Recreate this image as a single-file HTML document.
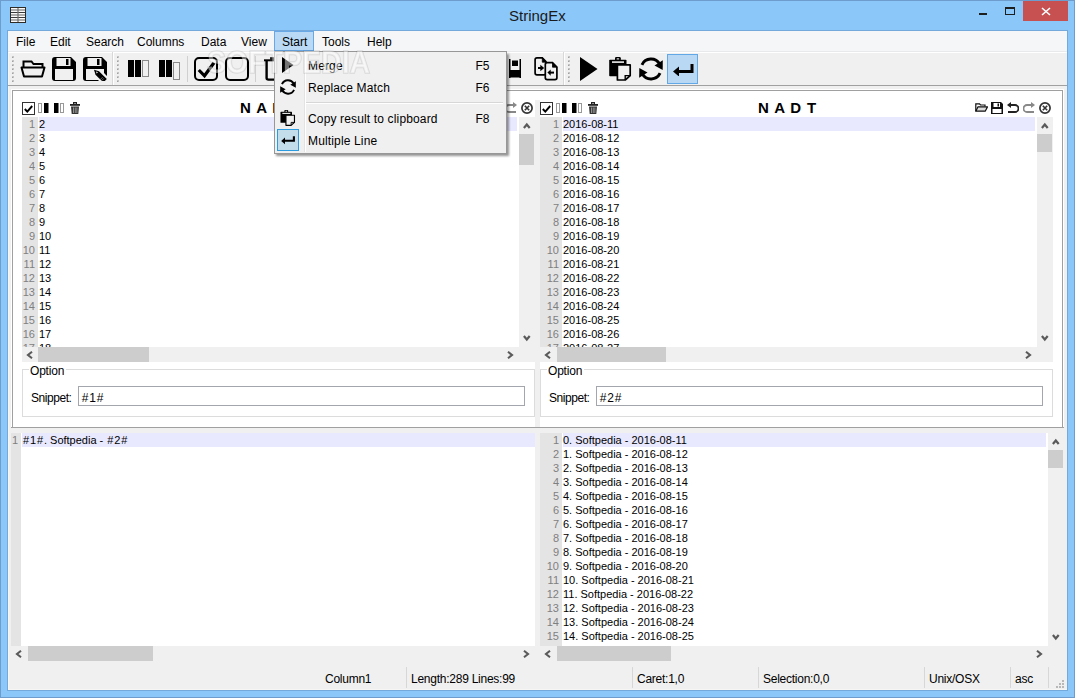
<!DOCTYPE html><html><head><meta charset="utf-8"><style>
html,body{margin:0;padding:0;}
body{width:1075px;height:698px;overflow:hidden;position:relative;background:#8cc7f9;font-family:"Liberation Sans",sans-serif;color:#000;}
.t{position:absolute;white-space:pre;font-size:12px;}
.ed{font-size:11px;}
.ln{position:absolute;text-align:right;color:#7f7f7f;font-size:11px;white-space:pre;}
</style></head><body><div style="position:absolute;left:0px;top:0px;width:1075px;height:698px;box-sizing:border-box;border:1px solid #6e9ccc;"></div><svg style="position:absolute;left:10px;top:7px;" width="16" height="16" viewBox="0 0 16 16"><rect x="0.5" y="0.5" width="15" height="15" fill="#fafafa" stroke="#2e2a26"/><g fill="#aeaeae"><rect x="1" y="2" width="14" height="2"/><rect x="1" y="7" width="14" height="2"/><rect x="1" y="12" width="14" height="2"/></g><g fill="#3a3a3a"><rect x="1" y="5" width="14" height="1"/><rect x="1" y="10" width="14" height="1"/></g><rect x="7.3" y="1" width="1.4" height="14" fill="#707070" opacity="0.85"/></svg><div class="t" style="left:509px;top:6.5px;line-height:17px;font-size:15px;color:#1a1a1a;">StringEx</div><div style="position:absolute;left:979px;top:13px;width:8px;height:2px;background:#1e1e1e;"></div><div style="position:absolute;left:1005px;top:7px;width:10px;height:8px;box-sizing:border-box;border:1px solid #1e1e1e;border-top-width:2px;"></div><div style="position:absolute;left:1023px;top:1px;width:45px;height:20px;background:#c75050;"></div><svg style="position:absolute;left:1041px;top:7px;" width="10" height="9" viewBox="0 0 10 9"><path d="M1 1 L9 8 M9 1 L1 8" stroke="#fff" stroke-width="1.6"/></svg><div style="position:absolute;left:7px;top:30px;width:1061px;height:661px;box-sizing:border-box;border:1px solid #74a9dc;background:#f0f0f0;"></div><div style="position:absolute;left:8px;top:31px;width:1px;height:658px;background:#f8f6f4;"></div><div style="position:absolute;left:8px;top:689px;width:1059px;height:1px;background:#f8f6f4;"></div><div style="position:absolute;left:8px;top:31px;width:1059px;height:20px;background:#f5f6f7;"></div><div style="position:absolute;left:8px;top:51px;width:1059px;height:1px;background:#e8e9eb;"></div><div style="position:absolute;left:8px;top:52px;width:1059px;height:1px;background:#ffffff;"></div><div style="position:absolute;left:274px;top:31px;width:40px;height:20px;box-sizing:border-box;background:#bad9f4;border:1px solid #68a8e6;"></div><div class="t" style="left:16px;top:35px;line-height:15px;">File</div><div class="t" style="left:50px;top:35px;line-height:15px;">Edit</div><div class="t" style="left:86px;top:35px;line-height:15px;">Search</div><div class="t" style="left:137px;top:35px;line-height:15px;">Columns</div><div class="t" style="left:201px;top:35px;line-height:15px;">Data</div><div class="t" style="left:241px;top:35px;line-height:15px;">View</div><div class="t" style="left:282px;top:35px;line-height:15px;">Start</div><div class="t" style="left:322px;top:35px;line-height:15px;">Tools</div><div class="t" style="left:367px;top:35px;line-height:15px;">Help</div><div style="position:absolute;left:8px;top:85px;width:1059px;height:1px;background:#a0a0a0;"></div><div style="position:absolute;left:12px;top:56px;width:2px;height:2px;background:#c4c4c4;"></div><div style="position:absolute;left:12px;top:57px;width:1px;height:1px;background:#a0a0a0;"></div><div style="position:absolute;left:12px;top:60px;width:2px;height:2px;background:#c4c4c4;"></div><div style="position:absolute;left:12px;top:61px;width:1px;height:1px;background:#a0a0a0;"></div><div style="position:absolute;left:12px;top:64px;width:2px;height:2px;background:#c4c4c4;"></div><div style="position:absolute;left:12px;top:65px;width:1px;height:1px;background:#a0a0a0;"></div><div style="position:absolute;left:12px;top:68px;width:2px;height:2px;background:#c4c4c4;"></div><div style="position:absolute;left:12px;top:69px;width:1px;height:1px;background:#a0a0a0;"></div><div style="position:absolute;left:12px;top:72px;width:2px;height:2px;background:#c4c4c4;"></div><div style="position:absolute;left:12px;top:73px;width:1px;height:1px;background:#a0a0a0;"></div><div style="position:absolute;left:12px;top:76px;width:2px;height:2px;background:#c4c4c4;"></div><div style="position:absolute;left:12px;top:77px;width:1px;height:1px;background:#a0a0a0;"></div><div style="position:absolute;left:12px;top:80px;width:2px;height:2px;background:#c4c4c4;"></div><div style="position:absolute;left:12px;top:81px;width:1px;height:1px;background:#a0a0a0;"></div><div style="position:absolute;left:117px;top:56px;width:2px;height:2px;background:#c4c4c4;"></div><div style="position:absolute;left:117px;top:57px;width:1px;height:1px;background:#a0a0a0;"></div><div style="position:absolute;left:117px;top:60px;width:2px;height:2px;background:#c4c4c4;"></div><div style="position:absolute;left:117px;top:61px;width:1px;height:1px;background:#a0a0a0;"></div><div style="position:absolute;left:117px;top:64px;width:2px;height:2px;background:#c4c4c4;"></div><div style="position:absolute;left:117px;top:65px;width:1px;height:1px;background:#a0a0a0;"></div><div style="position:absolute;left:117px;top:68px;width:2px;height:2px;background:#c4c4c4;"></div><div style="position:absolute;left:117px;top:69px;width:1px;height:1px;background:#a0a0a0;"></div><div style="position:absolute;left:117px;top:72px;width:2px;height:2px;background:#c4c4c4;"></div><div style="position:absolute;left:117px;top:73px;width:1px;height:1px;background:#a0a0a0;"></div><div style="position:absolute;left:117px;top:76px;width:2px;height:2px;background:#c4c4c4;"></div><div style="position:absolute;left:117px;top:77px;width:1px;height:1px;background:#a0a0a0;"></div><div style="position:absolute;left:117px;top:80px;width:2px;height:2px;background:#c4c4c4;"></div><div style="position:absolute;left:117px;top:81px;width:1px;height:1px;background:#a0a0a0;"></div><div style="position:absolute;left:568px;top:56px;width:2px;height:2px;background:#c4c4c4;"></div><div style="position:absolute;left:568px;top:57px;width:1px;height:1px;background:#a0a0a0;"></div><div style="position:absolute;left:568px;top:60px;width:2px;height:2px;background:#c4c4c4;"></div><div style="position:absolute;left:568px;top:61px;width:1px;height:1px;background:#a0a0a0;"></div><div style="position:absolute;left:568px;top:64px;width:2px;height:2px;background:#c4c4c4;"></div><div style="position:absolute;left:568px;top:65px;width:1px;height:1px;background:#a0a0a0;"></div><div style="position:absolute;left:568px;top:68px;width:2px;height:2px;background:#c4c4c4;"></div><div style="position:absolute;left:568px;top:69px;width:1px;height:1px;background:#a0a0a0;"></div><div style="position:absolute;left:568px;top:72px;width:2px;height:2px;background:#c4c4c4;"></div><div style="position:absolute;left:568px;top:73px;width:1px;height:1px;background:#a0a0a0;"></div><div style="position:absolute;left:568px;top:76px;width:2px;height:2px;background:#c4c4c4;"></div><div style="position:absolute;left:568px;top:77px;width:1px;height:1px;background:#a0a0a0;"></div><div style="position:absolute;left:568px;top:80px;width:2px;height:2px;background:#c4c4c4;"></div><div style="position:absolute;left:568px;top:81px;width:1px;height:1px;background:#a0a0a0;"></div><div style="position:absolute;left:112px;top:52px;width:1px;height:33px;background:#d8d8d8;"></div><div style="position:absolute;left:113px;top:52px;width:1px;height:33px;background:#ffffff;"></div><div style="position:absolute;left:563px;top:52px;width:1px;height:33px;background:#d8d8d8;"></div><div style="position:absolute;left:564px;top:52px;width:1px;height:33px;background:#ffffff;"></div><div style="position:absolute;left:187px;top:56px;width:1px;height:26px;background:#d0d0d0;"></div><div style="position:absolute;left:255px;top:56px;width:1px;height:26px;background:#d0d0d0;"></div><svg style="position:absolute;left:20px;top:60px;" width="26" height="18" viewBox="0 0 26 18"><path d="M3.5 7 V1.5 H11.5 L13.5 4 H22.5 V7" fill="none" stroke="#000" stroke-width="2"/><path d="M1.5 7.5 H24.5 L22 16.5 H4 Z" fill="none" stroke="#000" stroke-width="2" stroke-linejoin="round"/></svg><svg style="position:absolute;left:52px;top:57px;" width="24" height="24" viewBox="0 0 24 24"><path fill-rule="evenodd" fill="#000" d="M3 0 H19 L24 5 V21 Q24 24 21 24 H3 Q0 24 0 21 V3 Q0 0 3 0 Z M4.5 1 V9 H18.5 V1 Z M3 12 V23 H21 V12 Z"/><rect x="14" y="2" width="2.5" height="6" fill="#000"/></svg><svg style="position:absolute;left:83px;top:57px;" width="24" height="24" viewBox="0 0 24 24"><path fill-rule="evenodd" fill="#000" d="M3 0 H19 L24 5 V19 L21 16 V12 H3 V23 H15 L16 24 H3 Q0 24 0 21 V3 Q0 0 3 0 Z M4.5 1 V9 H18.5 V1 Z"/><rect x="14" y="2" width="2.5" height="6" fill="#000"/><path d="M11 12.8 L16 14.2 L23.8 22 L20.3 25.5 L12.5 17.7 Z" fill="#000"/><path d="M13 14.6 L15 15.2 L13.6 16.6 Z" fill="#f0f0f0"/><path d="M19.6 20.2 L16.8 23 M20.8 21.4 L18 24.2" stroke="#9a9a9a" stroke-width="0.7"/></svg><svg style="position:absolute;left:128px;top:60px;" width="22" height="20" viewBox="0 0 22 20"><rect x="0" y="0" width="6" height="17" fill="#000"/><rect x="7" y="0" width="6" height="17" fill="#000"/><rect x="14.5" y="0.5" width="6" height="16" fill="#f0f0f0" stroke="#8a8a8a"/></svg><svg style="position:absolute;left:159px;top:60px;" width="22" height="20" viewBox="0 0 22 20"><rect x="0" y="0" width="6" height="17" fill="#000"/><rect x="7" y="0" width="6" height="17" fill="#000"/><rect x="14.5" y="2.5" width="6" height="17" fill="#f0f0f0" stroke="#8a8a8a"/></svg><svg style="position:absolute;left:194px;top:57px;" width="24" height="24" viewBox="0 0 24 24"><rect x="1" y="1" width="22" height="22" rx="4" fill="none" stroke="#000" stroke-width="2"/><path d="M4.8 13 L10.5 18.8 L20 5.8" fill="none" stroke="#000" stroke-width="3.2"/></svg><svg style="position:absolute;left:225px;top:57px;" width="24" height="24" viewBox="0 0 24 24"><rect x="1" y="1" width="22" height="22" rx="4" fill="none" stroke="#000" stroke-width="2"/></svg><svg style="position:absolute;left:264px;top:57px;" width="10" height="24" viewBox="0 0 10 24"><path d="M2.6 4 V21 Q2.6 22.6 4.5 22.6 H10" fill="none" stroke="#000" stroke-width="2.4"/><path d="M0 3.3 H10" stroke="#000" stroke-width="2"/><rect x="6" y="0.2" width="4" height="3.5" fill="#222"/></svg><svg style="position:absolute;left:509px;top:59px;" width="12" height="19" viewBox="0 0 12 19"><rect x="3" y="1.5" width="6" height="5.5" fill="#000"/><rect x="0" y="11" width="12" height="7.5" fill="#000"/><rect x="0" y="0" width="1.5" height="19" fill="#000"/><rect x="10.5" y="0" width="1.5" height="19" fill="#000"/></svg><svg style="position:absolute;left:530px;top:54px;" width="30" height="30" viewBox="0 0 30 30"><path d="M7 3.8 H12.3 L16 7.5 V19 Q16 20.9 14 20.9 H7 Q5.1 20.9 5.1 19 V5.8 Q5.1 3.8 7 3.8 Z" fill="#f0f0f0" stroke="#000" stroke-width="1.7"/><path d="M12.3 3.8 V8.2 H16 Z" fill="#000" stroke="#000" stroke-width="0.8"/><path d="M8 14 H12" stroke="#000" stroke-width="2"/><path d="M10.3 10.8 L14.2 14 L10.3 17.2 Z" fill="#000"/><path d="M17.3 8.6 H22.5 L26.9 13 V23.8 Q26.9 25.7 25 25.7 H17.3 Q15.3 25.7 15.3 23.8 V10.6 Q15.3 8.6 17.3 8.6 Z" fill="#f0f0f0" stroke="#000" stroke-width="1.7"/><path d="M22.5 8.6 V13.2 H26.9 Z" fill="#000" stroke="#000" stroke-width="0.8"/><path d="M24 18.6 H20" stroke="#000" stroke-width="2"/><path d="M20.7 15.4 L17.4 18.6 L20.7 21.8 Z" fill="#000"/></svg><svg style="position:absolute;left:579px;top:57px;" width="19" height="24" viewBox="0 0 19 24"><path d="M1 0 L18.5 12 L1 24 Z" fill="#000"/></svg><svg style="position:absolute;left:604px;top:54px;" width="30" height="30" viewBox="0 0 30 30"><rect x="5.2" y="5.8" width="17.3" height="16.4" rx="0.8" fill="#000"/><rect x="11" y="3" width="5.8" height="3.6" rx="1.3" fill="#000"/><rect x="12.6" y="4.3" width="2.6" height="1.2" rx="0.5" fill="#d8d8d8"/><rect x="8" y="7.3" width="12" height="1.6" fill="#f0f0f0"/><path d="M13.4 10.9 H26.2 V21.6 L21.2 26 H13.4 Z" fill="#f0f0f0" stroke="#000" stroke-width="1.7" stroke-linejoin="round"/><path d="M21.2 26 V21.6 H26.2" fill="none" stroke="#000" stroke-width="1.4"/></svg><svg style="position:absolute;left:636px;top:54px;" width="30" height="30" viewBox="0 0 30 30"><path d="M5.94 10.77 A10 10 0 0 1 23.66 10" fill="none" stroke="#000" stroke-width="2.9"/><path d="M26.8 6.2 L26.7 16 L18.5 11.6 Z" fill="#000"/><path d="M24.06 19.23 A10 10 0 0 1 6.34 20" fill="none" stroke="#000" stroke-width="2.9"/><path d="M3.2 23.8 L3.3 14 L11.5 18.4 Z" fill="#000"/></svg><div style="position:absolute;left:667px;top:54px;width:31px;height:30px;box-sizing:border-box;background:#b8d8f4;border:1px solid #62a7e6;"></div><svg style="position:absolute;left:673px;top:63px;" width="21" height="13" viewBox="0 0 21 13"><path d="M19 1 V8.5 H5" fill="none" stroke="#000" stroke-width="3"/><path d="M0 8.5 L6 3.5 V13.5 Z" fill="#000"/></svg><div style="position:absolute;left:11px;top:89px;width:1053px;height:339px;background:#fff;"></div><div style="position:absolute;left:12px;top:90px;width:1051px;height:1px;background:#a0a0a0;"></div><div style="position:absolute;left:12px;top:90px;width:1px;height:337px;background:#a0a0a0;"></div><div style="position:absolute;left:1062px;top:90px;width:1px;height:337px;background:#a0a0a0;"></div><div style="position:absolute;left:11px;top:427px;width:1053px;height:1px;background:#a0a0a0;"></div><div style="position:absolute;left:535px;top:100px;width:5px;height:327px;background:#f0f0f0;"></div><div style="position:absolute;left:22px;top:102px;width:13px;height:13px;box-sizing:border-box;border:1px solid #333;background:#fff;"></div><svg style="position:absolute;left:24px;top:105px;" width="9" height="8" viewBox="0 0 9 8"><path d="M0.8 4 L3.3 6.6 L8.2 1" fill="none" stroke="#000" stroke-width="1.9"/></svg><svg style="position:absolute;left:38px;top:103px;" width="11" height="10" viewBox="0 0 11 10"><rect x="0.5" y="0.5" width="3" height="9" fill="#fff" stroke="#999"/><rect x="6" y="0" width="4.5" height="10" fill="#000"/></svg><svg style="position:absolute;left:54px;top:103px;" width="11" height="10" viewBox="0 0 11 10"><rect x="0" y="0" width="4.5" height="10" fill="#000"/><rect x="6.5" y="0.5" width="3" height="9" fill="#fff" stroke="#999"/></svg><svg style="position:absolute;left:70px;top:102px;" width="10" height="12" viewBox="0 0 10 12"><rect x="3.5" y="0.5" width="3" height="1.5" fill="none" stroke="#222" stroke-width="1"/><rect x="0" y="2" width="10" height="1.8" fill="#222"/><path d="M1 4.5 H9 L8.3 12 H1.7 Z" fill="#333"/><g fill="#aaa"><rect x="3" y="5.5" width="0.8" height="5.5"/><rect x="4.8" y="5.5" width="0.8" height="5.5"/><rect x="6.5" y="5.5" width="0.8" height="5.5"/></g></svg><svg style="position:absolute;left:457px;top:103px;" width="13" height="9" viewBox="0 0 13 9"><path d="M0.8 8.2 V0.8 H4.5 L5.5 2 H10 V3.5" fill="none" stroke="#111" stroke-width="1.2"/><path d="M0.8 8.2 L3 3.8 H12.5 L10.2 8.2 Z" fill="#ddd" stroke="#111" stroke-width="1.2" stroke-linejoin="round"/></svg><svg style="position:absolute;left:473px;top:102px;" width="12" height="12" viewBox="0 0 12 12"><path fill-rule="evenodd" fill="#111" d="M0 0 H10 L12 2 V12 H0 Z M2.5 1 V5 H9 V1 Z M1.5 7 V11 H10.5 V7 Z"/><rect x="6.5" y="1.5" width="1.5" height="3" fill="#111"/></svg><svg style="position:absolute;left:489px;top:102px;" width="12" height="12" viewBox="0 0 12 12"><path d="M3 3 H8 A3.5 3.5 0 0 1 8 10 H1" fill="none" stroke="#222" stroke-width="1.8"/><path d="M0 3 L4 0 V6 Z" fill="#222"/></svg><svg style="position:absolute;left:505px;top:102px;" width="12" height="12" viewBox="0 0 12 12"><path d="M9 3 H4 A3.5 3.5 0 0 0 4 10 H11" fill="none" stroke="#888" stroke-width="1.8"/><path d="M12 3 L8 0 V6 Z" fill="#888"/></svg><svg style="position:absolute;left:521px;top:102px;" width="12" height="12" viewBox="0 0 12 12"><circle cx="6" cy="6" r="5.1" fill="none" stroke="#333" stroke-width="1.7"/><path d="M3.8 3.8 L8.2 8.2 M8.2 3.8 L3.8 8.2" stroke="#333" stroke-width="1.6"/></svg><div class="t" style="left:240px;top:100px;line-height:16px;font-size:15px;font-weight:bold;letter-spacing:0.85px;">N A D T</div><div style="position:absolute;left:22px;top:117px;width:497px;height:230px;overflow:hidden;background:#fff;"><div style="position:absolute;left:0;top:0;width:16px;height:230px;background:#e4e4e4;"></div><div style="position:absolute;left:17px;top:0;width:478px;height:14px;background:#e8e8ff;"></div><div class="ln" style="left:0;top:0px;width:13px;line-height:14px;">1</div><div class="t" style="left:17px;top:0px;font-size:11px;line-height:14px;">2</div><div class="ln" style="left:0;top:14px;width:13px;line-height:14px;">2</div><div class="t" style="left:17px;top:14px;font-size:11px;line-height:14px;">3</div><div class="ln" style="left:0;top:28px;width:13px;line-height:14px;">3</div><div class="t" style="left:17px;top:28px;font-size:11px;line-height:14px;">4</div><div class="ln" style="left:0;top:42px;width:13px;line-height:14px;">4</div><div class="t" style="left:17px;top:42px;font-size:11px;line-height:14px;">5</div><div class="ln" style="left:0;top:56px;width:13px;line-height:14px;">5</div><div class="t" style="left:17px;top:56px;font-size:11px;line-height:14px;">6</div><div class="ln" style="left:0;top:70px;width:13px;line-height:14px;">6</div><div class="t" style="left:17px;top:70px;font-size:11px;line-height:14px;">7</div><div class="ln" style="left:0;top:84px;width:13px;line-height:14px;">7</div><div class="t" style="left:17px;top:84px;font-size:11px;line-height:14px;">8</div><div class="ln" style="left:0;top:98px;width:13px;line-height:14px;">8</div><div class="t" style="left:17px;top:98px;font-size:11px;line-height:14px;">9</div><div class="ln" style="left:0;top:112px;width:13px;line-height:14px;">9</div><div class="t" style="left:17px;top:112px;font-size:11px;line-height:14px;">10</div><div class="ln" style="left:0;top:126px;width:13px;line-height:14px;">10</div><div class="t" style="left:17px;top:126px;font-size:11px;line-height:14px;">11</div><div class="ln" style="left:0;top:140px;width:13px;line-height:14px;">11</div><div class="t" style="left:17px;top:140px;font-size:11px;line-height:14px;">12</div><div class="ln" style="left:0;top:154px;width:13px;line-height:14px;">12</div><div class="t" style="left:17px;top:154px;font-size:11px;line-height:14px;">13</div><div class="ln" style="left:0;top:168px;width:13px;line-height:14px;">13</div><div class="t" style="left:17px;top:168px;font-size:11px;line-height:14px;">14</div><div class="ln" style="left:0;top:182px;width:13px;line-height:14px;">14</div><div class="t" style="left:17px;top:182px;font-size:11px;line-height:14px;">15</div><div class="ln" style="left:0;top:196px;width:13px;line-height:14px;">15</div><div class="t" style="left:17px;top:196px;font-size:11px;line-height:14px;">16</div><div class="ln" style="left:0;top:210px;width:13px;line-height:14px;">16</div><div class="t" style="left:17px;top:210px;font-size:11px;line-height:14px;">17</div><div class="ln" style="left:0;top:224px;width:13px;line-height:14px;">17</div><div class="t" style="left:17px;top:224px;font-size:11px;line-height:14px;">18</div></div><div style="position:absolute;left:519px;top:117px;width:16px;height:230px;background:#f0f0f0;"></div><svg style="position:absolute;left:523px;top:122px;" width="8" height="7" viewBox="0 0 8 7"><path d="M0.9 6 L3.8 2.5 L6.7 6" fill="none" stroke="#5a5a5a" stroke-width="2.2"/></svg><div style="position:absolute;left:519px;top:134px;width:15px;height:31px;background:#cdcdcd;"></div><svg style="position:absolute;left:523px;top:335px;" width="8" height="7" viewBox="0 0 8 7"><path d="M0.9 1 L3.8 4.5 L6.7 1" fill="none" stroke="#5a5a5a" stroke-width="2.2"/></svg><div style="position:absolute;left:22px;top:347px;width:513px;height:15px;background:#f0f0f0;"></div><svg style="position:absolute;left:26px;top:351px;" width="7" height="8" viewBox="0 0 7 8"><path d="M6 0.8 L2 4 L6 7.2" fill="none" stroke="#5a5a5a" stroke-width="2.1"/></svg><div style="position:absolute;left:38px;top:347px;width:111px;height:15px;background:#cdcdcd;"></div><svg style="position:absolute;left:507px;top:351px;" width="7" height="8" viewBox="0 0 7 8"><path d="M1 0.8 L5 4 L1 7.2" fill="none" stroke="#5a5a5a" stroke-width="2.1"/></svg><div style="position:absolute;left:22px;top:369px;width:513px;height:48px;box-sizing:border-box;border:1px solid #dcdcdc;"></div><div style="position:absolute;left:29px;top:365px;width:37px;height:8px;background:#fff;"></div><div class="t" style="left:30px;top:364px;line-height:14px;font-size:12px;letter-spacing:-0.2px;">Option</div><div class="t" style="left:31px;top:390.5px;line-height:14px;font-size:12px;letter-spacing:-0.45px;">Snippet:</div><div style="position:absolute;left:78px;top:386px;width:447px;height:20px;box-sizing:border-box;border:1px solid #a3a6ad;background:#fff;"></div><div class="t" style="left:81px;top:391px;line-height:14px;font-size:12px;"><span style="margin:0 0.75px">#</span>1<span style="margin:0 0.75px">#</span></div><div style="position:absolute;left:540px;top:102px;width:13px;height:13px;box-sizing:border-box;border:1px solid #333;background:#fff;"></div><svg style="position:absolute;left:542px;top:105px;" width="9" height="8" viewBox="0 0 9 8"><path d="M0.8 4 L3.3 6.6 L8.2 1" fill="none" stroke="#000" stroke-width="1.9"/></svg><svg style="position:absolute;left:556px;top:103px;" width="11" height="10" viewBox="0 0 11 10"><rect x="0.5" y="0.5" width="3" height="9" fill="#fff" stroke="#999"/><rect x="6" y="0" width="4.5" height="10" fill="#000"/></svg><svg style="position:absolute;left:572px;top:103px;" width="11" height="10" viewBox="0 0 11 10"><rect x="0" y="0" width="4.5" height="10" fill="#000"/><rect x="6.5" y="0.5" width="3" height="9" fill="#fff" stroke="#999"/></svg><svg style="position:absolute;left:588px;top:102px;" width="10" height="12" viewBox="0 0 10 12"><rect x="3.5" y="0.5" width="3" height="1.5" fill="none" stroke="#222" stroke-width="1"/><rect x="0" y="2" width="10" height="1.8" fill="#222"/><path d="M1 4.5 H9 L8.3 12 H1.7 Z" fill="#333"/><g fill="#aaa"><rect x="3" y="5.5" width="0.8" height="5.5"/><rect x="4.8" y="5.5" width="0.8" height="5.5"/><rect x="6.5" y="5.5" width="0.8" height="5.5"/></g></svg><svg style="position:absolute;left:975px;top:103px;" width="13" height="9" viewBox="0 0 13 9"><path d="M0.8 8.2 V0.8 H4.5 L5.5 2 H10 V3.5" fill="none" stroke="#111" stroke-width="1.2"/><path d="M0.8 8.2 L3 3.8 H12.5 L10.2 8.2 Z" fill="#ddd" stroke="#111" stroke-width="1.2" stroke-linejoin="round"/></svg><svg style="position:absolute;left:991px;top:102px;" width="12" height="12" viewBox="0 0 12 12"><path fill-rule="evenodd" fill="#111" d="M0 0 H10 L12 2 V12 H0 Z M2.5 1 V5 H9 V1 Z M1.5 7 V11 H10.5 V7 Z"/><rect x="6.5" y="1.5" width="1.5" height="3" fill="#111"/></svg><svg style="position:absolute;left:1007px;top:102px;" width="12" height="12" viewBox="0 0 12 12"><path d="M3 3 H8 A3.5 3.5 0 0 1 8 10 H1" fill="none" stroke="#222" stroke-width="1.8"/><path d="M0 3 L4 0 V6 Z" fill="#222"/></svg><svg style="position:absolute;left:1023px;top:102px;" width="12" height="12" viewBox="0 0 12 12"><path d="M9 3 H4 A3.5 3.5 0 0 0 4 10 H11" fill="none" stroke="#888" stroke-width="1.8"/><path d="M12 3 L8 0 V6 Z" fill="#888"/></svg><svg style="position:absolute;left:1039px;top:102px;" width="12" height="12" viewBox="0 0 12 12"><circle cx="6" cy="6" r="5.1" fill="none" stroke="#333" stroke-width="1.7"/><path d="M3.8 3.8 L8.2 8.2 M8.2 3.8 L3.8 8.2" stroke="#333" stroke-width="1.6"/></svg><div class="t" style="left:758px;top:100px;line-height:16px;font-size:15px;font-weight:bold;letter-spacing:0.85px;">N A D T</div><div style="position:absolute;left:540px;top:117px;width:497px;height:230px;overflow:hidden;background:#fff;"><div style="position:absolute;left:0;top:0;width:22px;height:230px;background:#e4e4e4;"></div><div style="position:absolute;left:23px;top:0;width:472px;height:14px;background:#e8e8ff;"></div><div class="ln" style="left:0;top:0px;width:19px;line-height:14px;">1</div><div class="t" style="left:23px;top:0px;font-size:11px;line-height:14px;">2016-08-11</div><div class="ln" style="left:0;top:14px;width:19px;line-height:14px;">2</div><div class="t" style="left:23px;top:14px;font-size:11px;line-height:14px;">2016-08-12</div><div class="ln" style="left:0;top:28px;width:19px;line-height:14px;">3</div><div class="t" style="left:23px;top:28px;font-size:11px;line-height:14px;">2016-08-13</div><div class="ln" style="left:0;top:42px;width:19px;line-height:14px;">4</div><div class="t" style="left:23px;top:42px;font-size:11px;line-height:14px;">2016-08-14</div><div class="ln" style="left:0;top:56px;width:19px;line-height:14px;">5</div><div class="t" style="left:23px;top:56px;font-size:11px;line-height:14px;">2016-08-15</div><div class="ln" style="left:0;top:70px;width:19px;line-height:14px;">6</div><div class="t" style="left:23px;top:70px;font-size:11px;line-height:14px;">2016-08-16</div><div class="ln" style="left:0;top:84px;width:19px;line-height:14px;">7</div><div class="t" style="left:23px;top:84px;font-size:11px;line-height:14px;">2016-08-17</div><div class="ln" style="left:0;top:98px;width:19px;line-height:14px;">8</div><div class="t" style="left:23px;top:98px;font-size:11px;line-height:14px;">2016-08-18</div><div class="ln" style="left:0;top:112px;width:19px;line-height:14px;">9</div><div class="t" style="left:23px;top:112px;font-size:11px;line-height:14px;">2016-08-19</div><div class="ln" style="left:0;top:126px;width:19px;line-height:14px;">10</div><div class="t" style="left:23px;top:126px;font-size:11px;line-height:14px;">2016-08-20</div><div class="ln" style="left:0;top:140px;width:19px;line-height:14px;">11</div><div class="t" style="left:23px;top:140px;font-size:11px;line-height:14px;">2016-08-21</div><div class="ln" style="left:0;top:154px;width:19px;line-height:14px;">12</div><div class="t" style="left:23px;top:154px;font-size:11px;line-height:14px;">2016-08-22</div><div class="ln" style="left:0;top:168px;width:19px;line-height:14px;">13</div><div class="t" style="left:23px;top:168px;font-size:11px;line-height:14px;">2016-08-23</div><div class="ln" style="left:0;top:182px;width:19px;line-height:14px;">14</div><div class="t" style="left:23px;top:182px;font-size:11px;line-height:14px;">2016-08-24</div><div class="ln" style="left:0;top:196px;width:19px;line-height:14px;">15</div><div class="t" style="left:23px;top:196px;font-size:11px;line-height:14px;">2016-08-25</div><div class="ln" style="left:0;top:210px;width:19px;line-height:14px;">16</div><div class="t" style="left:23px;top:210px;font-size:11px;line-height:14px;">2016-08-26</div><div class="ln" style="left:0;top:224px;width:19px;line-height:14px;">17</div><div class="t" style="left:23px;top:224px;font-size:11px;line-height:14px;">2016-08-27</div></div><div style="position:absolute;left:1037px;top:117px;width:16px;height:230px;background:#f0f0f0;"></div><svg style="position:absolute;left:1041px;top:122px;" width="8" height="7" viewBox="0 0 8 7"><path d="M0.9 6 L3.8 2.5 L6.7 6" fill="none" stroke="#5a5a5a" stroke-width="2.2"/></svg><div style="position:absolute;left:1037px;top:134px;width:15px;height:18px;background:#cdcdcd;"></div><svg style="position:absolute;left:1041px;top:335px;" width="8" height="7" viewBox="0 0 8 7"><path d="M0.9 1 L3.8 4.5 L6.7 1" fill="none" stroke="#5a5a5a" stroke-width="2.2"/></svg><div style="position:absolute;left:540px;top:347px;width:513px;height:15px;background:#f0f0f0;"></div><svg style="position:absolute;left:544px;top:351px;" width="7" height="8" viewBox="0 0 7 8"><path d="M6 0.8 L2 4 L6 7.2" fill="none" stroke="#5a5a5a" stroke-width="2.1"/></svg><div style="position:absolute;left:557px;top:347px;width:109px;height:15px;background:#cdcdcd;"></div><svg style="position:absolute;left:1025px;top:351px;" width="7" height="8" viewBox="0 0 7 8"><path d="M1 0.8 L5 4 L1 7.2" fill="none" stroke="#5a5a5a" stroke-width="2.1"/></svg><div style="position:absolute;left:540px;top:369px;width:513px;height:48px;box-sizing:border-box;border:1px solid #dcdcdc;"></div><div style="position:absolute;left:547px;top:365px;width:37px;height:8px;background:#fff;"></div><div class="t" style="left:548px;top:364px;line-height:14px;font-size:12px;letter-spacing:-0.2px;">Option</div><div class="t" style="left:549px;top:390.5px;line-height:14px;font-size:12px;letter-spacing:-0.45px;">Snippet:</div><div style="position:absolute;left:596px;top:386px;width:447px;height:20px;box-sizing:border-box;border:1px solid #a3a6ad;background:#fff;"></div><div class="t" style="left:599px;top:391px;line-height:14px;font-size:12px;"><span style="margin:0 0.75px">#</span>2<span style="margin:0 0.75px">#</span></div><div style="position:absolute;left:11px;top:433px;width:524px;height:213px;overflow:hidden;background:#fff;"><div style="position:absolute;left:0;top:0;width:10px;height:213px;background:#e4e4e4;"></div><div style="position:absolute;left:11px;top:0;width:513px;height:14px;background:#e8e8ff;"></div><div class="ln" style="left:0;top:0px;width:7px;line-height:14px;">1</div><div class="t" style="left:11px;top:0px;font-size:11px;line-height:14px;"><span style="margin:0 0.9px">#</span>1<span style="margin:0 0.9px">#</span>. Softpedia - <span style="margin:0 0.9px">#</span>2<span style="margin:0 0.9px">#</span></div></div><div style="position:absolute;left:11px;top:646px;width:524px;height:15px;background:#f0f0f0;"></div><svg style="position:absolute;left:15px;top:650px;" width="7" height="8" viewBox="0 0 7 8"><path d="M6 0.8 L2 4 L6 7.2" fill="none" stroke="#5a5a5a" stroke-width="2.1"/></svg><div style="position:absolute;left:28px;top:646px;width:125px;height:15px;background:#cdcdcd;"></div><svg style="position:absolute;left:523px;top:650px;" width="7" height="8" viewBox="0 0 7 8"><path d="M1 0.8 L5 4 L1 7.2" fill="none" stroke="#5a5a5a" stroke-width="2.1"/></svg><div style="position:absolute;left:540px;top:433px;width:508px;height:213px;overflow:hidden;background:#fff;"><div style="position:absolute;left:0;top:0;width:22px;height:213px;background:#e4e4e4;"></div><div style="position:absolute;left:23px;top:0;width:483px;height:14px;background:#e8e8ff;"></div><div class="ln" style="left:0;top:0px;width:19px;line-height:14px;">1</div><div class="t" style="left:23px;top:0px;font-size:11px;line-height:14px;">0. Softpedia - 2016-08-11</div><div class="ln" style="left:0;top:14px;width:19px;line-height:14px;">2</div><div class="t" style="left:23px;top:14px;font-size:11px;line-height:14px;">1. Softpedia - 2016-08-12</div><div class="ln" style="left:0;top:28px;width:19px;line-height:14px;">3</div><div class="t" style="left:23px;top:28px;font-size:11px;line-height:14px;">2. Softpedia - 2016-08-13</div><div class="ln" style="left:0;top:42px;width:19px;line-height:14px;">4</div><div class="t" style="left:23px;top:42px;font-size:11px;line-height:14px;">3. Softpedia - 2016-08-14</div><div class="ln" style="left:0;top:56px;width:19px;line-height:14px;">5</div><div class="t" style="left:23px;top:56px;font-size:11px;line-height:14px;">4. Softpedia - 2016-08-15</div><div class="ln" style="left:0;top:70px;width:19px;line-height:14px;">6</div><div class="t" style="left:23px;top:70px;font-size:11px;line-height:14px;">5. Softpedia - 2016-08-16</div><div class="ln" style="left:0;top:84px;width:19px;line-height:14px;">7</div><div class="t" style="left:23px;top:84px;font-size:11px;line-height:14px;">6. Softpedia - 2016-08-17</div><div class="ln" style="left:0;top:98px;width:19px;line-height:14px;">8</div><div class="t" style="left:23px;top:98px;font-size:11px;line-height:14px;">7. Softpedia - 2016-08-18</div><div class="ln" style="left:0;top:112px;width:19px;line-height:14px;">9</div><div class="t" style="left:23px;top:112px;font-size:11px;line-height:14px;">8. Softpedia - 2016-08-19</div><div class="ln" style="left:0;top:126px;width:19px;line-height:14px;">10</div><div class="t" style="left:23px;top:126px;font-size:11px;line-height:14px;">9. Softpedia - 2016-08-20</div><div class="ln" style="left:0;top:140px;width:19px;line-height:14px;">11</div><div class="t" style="left:23px;top:140px;font-size:11px;line-height:14px;">10. Softpedia - 2016-08-21</div><div class="ln" style="left:0;top:154px;width:19px;line-height:14px;">12</div><div class="t" style="left:23px;top:154px;font-size:11px;line-height:14px;">11. Softpedia - 2016-08-22</div><div class="ln" style="left:0;top:168px;width:19px;line-height:14px;">13</div><div class="t" style="left:23px;top:168px;font-size:11px;line-height:14px;">12. Softpedia - 2016-08-23</div><div class="ln" style="left:0;top:182px;width:19px;line-height:14px;">14</div><div class="t" style="left:23px;top:182px;font-size:11px;line-height:14px;">13. Softpedia - 2016-08-24</div><div class="ln" style="left:0;top:196px;width:19px;line-height:14px;">15</div><div class="t" style="left:23px;top:196px;font-size:11px;line-height:14px;">14. Softpedia - 2016-08-25</div><div class="ln" style="left:0;top:210px;width:19px;line-height:14px;">16</div><div class="t" style="left:23px;top:210px;font-size:11px;line-height:14px;">15. Softpedia - 2016-08-26</div></div><div style="position:absolute;left:1048px;top:433px;width:16px;height:213px;background:#f0f0f0;"></div><svg style="position:absolute;left:1052px;top:438px;" width="8" height="7" viewBox="0 0 8 7"><path d="M0.9 6 L3.8 2.5 L6.7 6" fill="none" stroke="#5a5a5a" stroke-width="2.2"/></svg><div style="position:absolute;left:1048px;top:450px;width:15px;height:18px;background:#cdcdcd;"></div><svg style="position:absolute;left:1052px;top:634px;" width="8" height="7" viewBox="0 0 8 7"><path d="M0.9 1 L3.8 4.5 L6.7 1" fill="none" stroke="#5a5a5a" stroke-width="2.2"/></svg><div style="position:absolute;left:540px;top:646px;width:508px;height:15px;background:#f0f0f0;"></div><svg style="position:absolute;left:544px;top:650px;" width="7" height="8" viewBox="0 0 7 8"><path d="M6 0.8 L2 4 L6 7.2" fill="none" stroke="#5a5a5a" stroke-width="2.1"/></svg><div style="position:absolute;left:557px;top:646px;width:114px;height:15px;background:#cdcdcd;"></div><svg style="position:absolute;left:1036px;top:650px;" width="7" height="8" viewBox="0 0 7 8"><path d="M1 0.8 L5 4 L1 7.2" fill="none" stroke="#5a5a5a" stroke-width="2.1"/></svg><div style="position:absolute;left:406px;top:667px;width:1px;height:21px;background:#d7d7d7;"></div><div style="position:absolute;left:632px;top:667px;width:1px;height:21px;background:#d7d7d7;"></div><div style="position:absolute;left:758px;top:667px;width:1px;height:21px;background:#d7d7d7;"></div><div style="position:absolute;left:924px;top:667px;width:1px;height:21px;background:#d7d7d7;"></div><div style="position:absolute;left:1010px;top:667px;width:1px;height:21px;background:#d7d7d7;"></div><div style="position:absolute;left:1048px;top:667px;width:1px;height:21px;background:#d7d7d7;"></div><div class="t" style="left:325px;top:672px;line-height:14px;font-size:12px;letter-spacing:-0.25px;">Column1</div><div class="t" style="left:411px;top:672px;line-height:14px;font-size:12px;letter-spacing:-0.25px;">Length:289 Lines:99</div><div class="t" style="left:637px;top:672px;line-height:14px;font-size:12px;letter-spacing:-0.25px;">Caret:1,0</div><div class="t" style="left:763px;top:672px;line-height:14px;font-size:12px;letter-spacing:-0.25px;">Selection:0,0</div><div class="t" style="left:929px;top:672px;line-height:14px;font-size:12px;letter-spacing:-0.25px;">Unix/OSX</div><div class="t" style="left:1015px;top:672px;line-height:14px;font-size:12px;letter-spacing:-0.25px;">asc</div><div style="position:absolute;left:1062px;top:680px;width:2px;height:2px;background:#b8b8b8;"></div><div style="position:absolute;left:1059px;top:683px;width:2px;height:2px;background:#b8b8b8;"></div><div style="position:absolute;left:1062px;top:683px;width:2px;height:2px;background:#b8b8b8;"></div><div style="position:absolute;left:1056px;top:686px;width:2px;height:2px;background:#b8b8b8;"></div><div style="position:absolute;left:1059px;top:686px;width:2px;height:2px;background:#b8b8b8;"></div><div style="position:absolute;left:1062px;top:686px;width:2px;height:2px;background:#b8b8b8;"></div><div style="position:absolute;left:276px;top:54px;width:233px;height:102px;background:rgba(0,0,0,0.42);filter:blur(0.9px);"></div><div style="position:absolute;left:274px;top:51px;width:233px;height:103px;box-sizing:border-box;background:#f0f0f0;border:1px solid #979797;"></div><div style="position:absolute;left:304px;top:53px;width:1px;height:99px;background:#e3e3e3;"></div><div style="position:absolute;left:305px;top:53px;width:1px;height:99px;background:#ffffff;"></div><div style="position:absolute;left:306px;top:102px;width:197px;height:1px;background:#d7d7d7;"></div><div style="position:absolute;left:306px;top:103px;width:197px;height:1px;background:#ffffff;"></div><div class="t" style="left:308px;top:59px;line-height:14px;font-size:12px;letter-spacing:0.15px;">Merge</div><div class="t" style="left:475.5px;top:59px;line-height:14px;font-size:12px;">F5</div><div class="t" style="left:308px;top:81px;line-height:14px;font-size:12px;letter-spacing:0.15px;">Replace Match</div><div class="t" style="left:475.5px;top:81px;line-height:14px;font-size:12px;">F6</div><div class="t" style="left:308px;top:112px;line-height:14px;font-size:12px;letter-spacing:0.15px;">Copy result to clipboard</div><div class="t" style="left:475.5px;top:112px;line-height:14px;font-size:12px;">F8</div><div class="t" style="left:308px;top:134px;line-height:14px;font-size:12px;letter-spacing:0.15px;">Multiple Line</div><svg style="position:absolute;left:282px;top:57px;" width="12" height="16" viewBox="0 0 12 16"><path d="M0 0 L11.5 8 L0 16 Z" fill="#000"/></svg><svg style="position:absolute;left:278px;top:77px;" width="20" height="20" viewBox="0 0 30 30"><path d="M5.94 10.77 A10 10 0 0 1 23.66 10" fill="none" stroke="#000" stroke-width="2.9"/><path d="M26.8 6.2 L26.7 16 L18.5 11.6 Z" fill="#000"/><path d="M24.06 19.23 A10 10 0 0 1 6.34 20" fill="none" stroke="#000" stroke-width="2.9"/><path d="M3.2 23.8 L3.3 14 L11.5 18.4 Z" fill="#000"/></svg><svg style="position:absolute;left:277px;top:108px;" width="20" height="20" viewBox="0 0 30 30"><rect x="5.2" y="5.8" width="17.3" height="16.4" rx="0.8" fill="#000"/><rect x="11" y="3" width="5.8" height="3.6" rx="1.3" fill="#000"/><rect x="12.6" y="4.3" width="2.6" height="1.2" rx="0.5" fill="#d8d8d8"/><rect x="8" y="7.3" width="12" height="1.6" fill="#f0f0f0"/><path d="M13.4 10.9 H26.2 V21.6 L21.2 26 H13.4 Z" fill="#f0f0f0" stroke="#000" stroke-width="1.7" stroke-linejoin="round"/><path d="M21.2 26 V21.6 H26.2" fill="none" stroke="#000" stroke-width="1.4"/></svg><div style="position:absolute;left:277px;top:129px;width:22px;height:22px;box-sizing:border-box;background:#c3ddeb;border:1px solid #2d9be0;"></div><svg style="position:absolute;left:281px;top:135px;" width="15" height="11" viewBox="0 0 15 11"><path d="M12.9 1.2 V5.8 H3.5" fill="none" stroke="#000" stroke-width="2.1"/><path d="M0.2 5.9 L4 2.6 V9.2 Z" fill="#000"/></svg><div class="t" style="left:207px;top:45px;font-size:31px;line-height:36px;font-weight:bold;color:transparent;-webkit-text-stroke:1.6px rgba(0,0,0,0.10);filter:blur(0.6px);transform:scaleX(0.92);transform-origin:0 0;">SOFTPEDIA</div><div class="t" style="left:207px;top:45px;font-size:31px;line-height:36px;font-weight:bold;color:rgba(255,255,255,0.45);transform:scaleX(0.92);transform-origin:0 0;">SOFTPEDIA</div></body></html>
